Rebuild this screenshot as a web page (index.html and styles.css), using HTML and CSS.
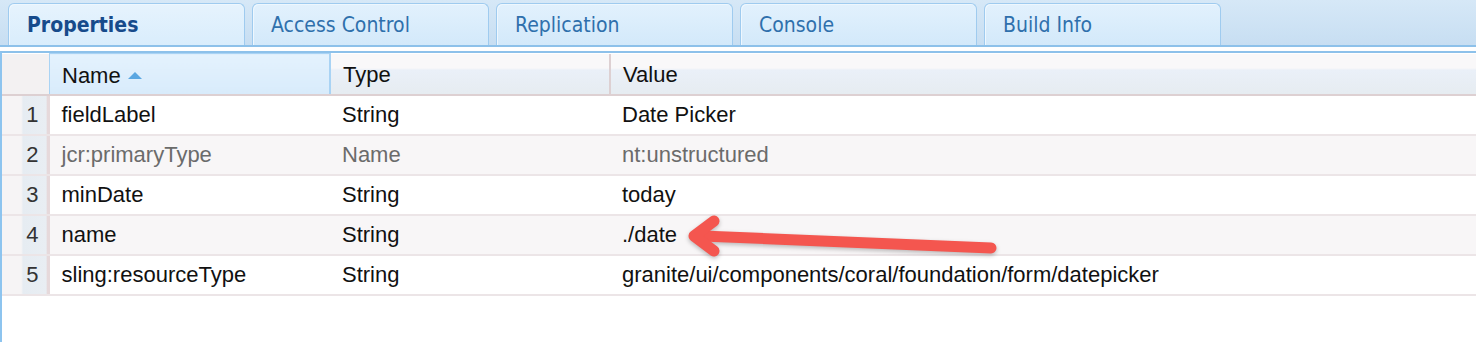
FILE: index.html
```html
<!DOCTYPE html>
<html lang="en">
<head>
    <meta charset="UTF-8">
    <meta name="viewport" content="width=device-width, initial-scale=1.0">
    <title>CRXDE Properties</title>
    <link rel="stylesheet" href="styles.css">
</head>
<body>
    <div class="panel">
        <ul class="tabs">
            <li class="tab active">Properties</li>
            <li class="tab">Access Control</li>
            <li class="tab">Replication</li>
            <li class="tab">Console</li>
            <li class="tab">Build Info</li>
        </ul>

        <div class="grid-wrap">
            <table class="grid">
                <thead>
                    <tr>
                        <th class="num"></th>
                        <th class="col-name sorted">Name <span class="sort-arrow"></span></th>
                        <th class="col-type">Type</th>
                        <th class="col-value">Value</th>
                    </tr>
                </thead>
                <tbody>
                    <tr>
                        <td class="num">1</td>
                        <td>fieldLabel</td>
                        <td>String</td>
                        <td>Date Picker</td>
                    </tr>
                    <tr class="alt muted">
                        <td class="num">2</td>
                        <td>jcr:primaryType</td>
                        <td>Name</td>
                        <td>nt:unstructured</td>
                    </tr>
                    <tr>
                        <td class="num">3</td>
                        <td>minDate</td>
                        <td>String</td>
                        <td>today</td>
                    </tr>
                    <tr class="alt">
                        <td class="num">4</td>
                        <td>name</td>
                        <td>String</td>
                        <td>./date</td>
                    </tr>
                    <tr>
                        <td class="num">5</td>
                        <td>sling:resourceType</td>
                        <td>String</td>
                        <td>granite/ui/components/coral/foundation/form/datepicker</td>
                    </tr>
                </tbody>
            </table>
        </div>

        <!-- annotation arrow pointing at ./date -->
        <svg class="annotation" width="1476" height="342" viewBox="0 0 1476 342">
            <g fill="none" stroke="#f4564f" stroke-width="11" stroke-linecap="round" stroke-linejoin="round">
                <path d="M991 248 L702 236"/>
                <path d="M714 221 L694 236 L714 251"/>
            </g>
        </svg>
    </div>
</body>
</html>
```

FILE: styles.css
```css
body {
    margin: 0;
    background: #ffffff;
    font-family: "Liberation Sans", Arial, sans-serif;
}

.panel {
    position: relative;
    width: 1476px;
    height: 342px;
    overflow: hidden;
}

/* tab strip */
.tabs {
    list-style: none;
    margin: 0;
    padding: 3px 0 0 8px;
    height: 42px;
    display: flex;
    gap: 7px;
    background: linear-gradient(to bottom, #d6e8f7, #c7def2);
    border-bottom: 2px solid #8dc1ea;
}

.tab {
    box-sizing: border-box;
    width: 237px;
    height: 42px;
    padding: 9px 0 0 18px;
    border: 1px solid #9fcbef;
    border-bottom: none;
    border-radius: 6px 6px 0 0;
    background: linear-gradient(to bottom, #e2f1fd, #d3e9fa);
    box-shadow: inset 1px 1px 0 #eef7fe;
    font-family: "DejaVu Sans Condensed", "DejaVu Sans", sans-serif;
    font-size: 21px;
    color: #2f70ac;
}

.tab.active {
    font-weight: bold;
    color: #174b8b;
    background: linear-gradient(to bottom, #e6f3fd, #d9edfc);
}

/* grid */
.grid-wrap {
    margin-top: 4px;
    border-top: 2px solid #8dc1ea;
    border-left: 2px solid #8dc4ef;
    height: 300px;
    background: #ffffff;
}

.grid {
    width: 100%;
    border-collapse: collapse;
    table-layout: fixed;
    font-size: 22px;
    color: #111111;
}

.grid th {
    height: 37px;
    padding: 3px 12px 0;
    text-align: left;
    font-weight: normal;
    background: linear-gradient(to bottom, #f9f8f9 0, #f9f8f9 35%, #eaf0f8 40%, #e6ecf1 100%);
    border-bottom: 2px solid #ddd0d2;
}

.grid th.num {
    width: 47px;
    padding: 0;
    background: #f3f1f2;
    border-right: 1px solid #a9d3f4;
}

.grid th.col-name {
    width: 255px;
    background: linear-gradient(to bottom, #e4f2fd, #d8ebfb);
    border-right: 2px solid #a9d3f4;
    border-top: 1px solid #a9d3f4;
}

.grid th.col-type {
    width: 254px;
}

.grid th.col-value {
    border-left: 2px solid #ddd0d2;
}

.sort-arrow {
    display: inline-block;
    width: 0;
    height: 0;
    margin-left: 1px;
    vertical-align: 4px;
    border-left: 7px solid transparent;
    border-right: 7px solid transparent;
    border-bottom: 7px solid #5ba7e1;
}

.grid td {
    height: 38px;
    padding: 0 12px;
    border-bottom: 2px solid #ece5e7;
    white-space: nowrap;
}

.grid td.num {
    padding: 0 11px 0 0;
    text-align: right;
    color: #333333;
    background: linear-gradient(to right, #f6f4f5 0, #f6f4f5 40%, #e6ecf2 44%, #e9eef3 92%, #e6d9db 94%, #e6d9db 100%);
}

.grid tr.alt td {
    background: #f8f6f7;
}

.grid tr.alt td.num {
    background: linear-gradient(to right, #f6f4f5 0, #f6f4f5 40%, #e6ecf2 44%, #e9eef3 92%, #e6d9db 94%, #e6d9db 100%);
}

.grid tr.muted td {
    color: #6b6b6b;
}

.grid tr.muted td.num {
    color: #333333;
}

.annotation {
    position: absolute;
    left: 0;
    top: 0;
    pointer-events: none;
    filter: drop-shadow(0 2px 2px rgba(0, 0, 0, 0.25));
}
```
